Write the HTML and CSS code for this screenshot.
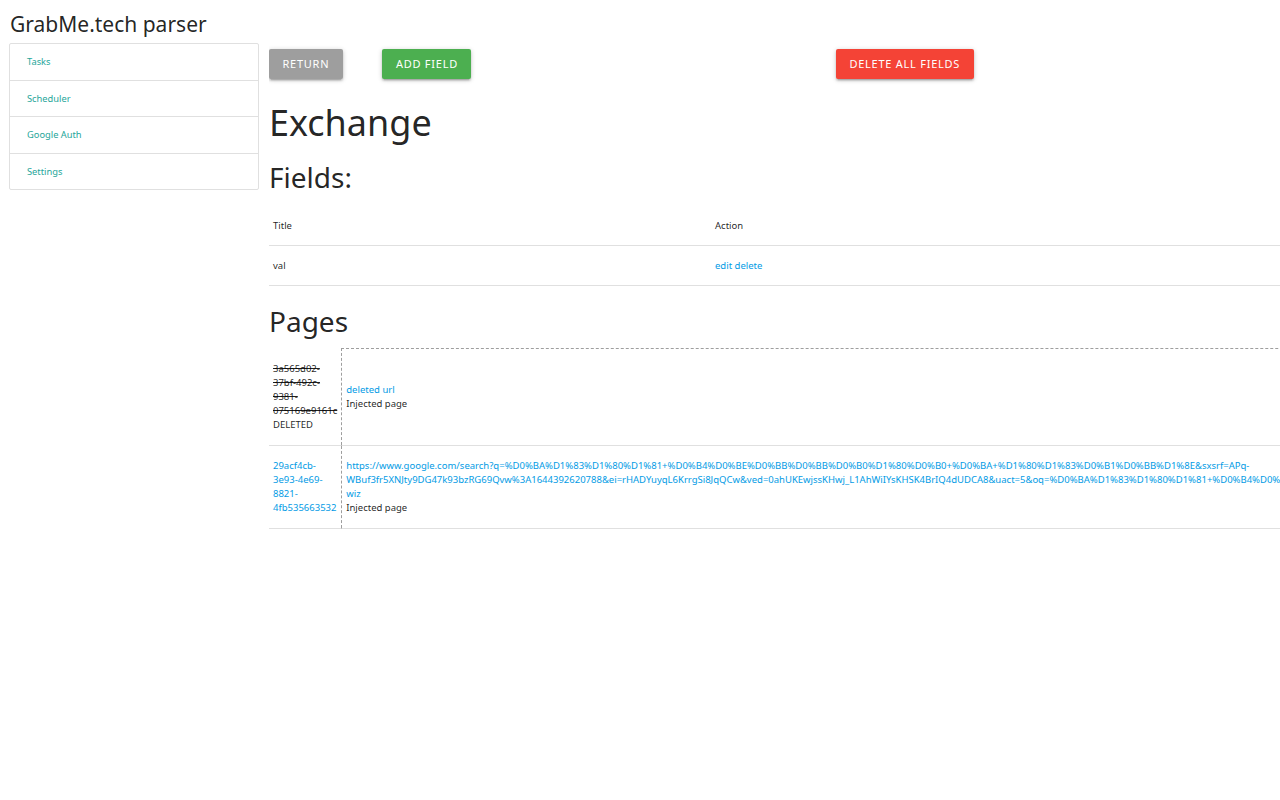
FILE: index.html
```html
<!DOCTYPE html>
<html lang="en">
<head>
<meta charset="utf-8">
<title>GrabMe.tech parser</title>
<link rel="stylesheet" href="styles.css">
</head>
<body>
<header class="brand">GrabMe.tech parser</header>
<div class="layout">
  <nav class="sidebar">
    <a class="nav-item" href="#">Tasks</a>
    <a class="nav-item" href="#">Scheduler</a>
    <a class="nav-item" href="#">Google Auth</a>
    <a class="nav-item" href="#">Settings</a>
  </nav>
  <main class="content">
    <div class="toolbar">
      <a class="btn btn-grey" href="#">Return</a>
      <a class="btn btn-green" href="#">Add field</a>
      <a class="btn btn-red" href="#">Delete all fields</a>
    </div>
    <h1 class="title">Exchange</h1>
    <h2 class="section fields-title">Fields:</h2>
    <table class="fields">
      <thead>
        <tr><th class="col-title">Title</th><th>Action</th></tr>
      </thead>
      <tbody>
        <tr><td>val</td><td><a href="#">edit</a> <a href="#">delete</a></td></tr>
      </tbody>
    </table>
    <h2 class="section pages-title">Pages</h2>
    <table class="pages">
      <tbody>
        <tr>
          <td class="uuid"><s>3a565d02-37bf-492c-9381-075169e9161c</s><br>DELETED</td>
          <td class="url"><a href="#">deleted url</a><br>Injected page</td>
        </tr>
        <tr>
          <td class="uuid"><a href="#">29acf4cb-3e93-4e69-8821-4fb535663532</a></td>
          <td class="url"><a href="#">https://www.google.com/search?q=%D0%BA%D1%83%D1%80%D1%81+%D0%B4%D0%BE%D0%BB%D0%BB%D0%B0%D1%80%D0%B0+%D0%BA+%D1%80%D1%83%D0%B1%D0%BB%D1%8E&amp;sxsrf=APq-WBuf3fr5XNJty9DG47k93bzRG69Qvw%3A1644392620788&amp;ei=rHADYuyqL6KrrgSi8JqQCw&amp;ved=0ahUKEwjssKHwj_L1AhWiIYsKHSK4BrIQ4dUDCA8&amp;uact=5&amp;oq=%D0%BA%D1%83%D1%80%D1%81+%D0%B4%D0%BE%D0%BB%D0%BB%D0%B0%D1%80%D0%B0+%D0%BA+%D1%80%D1%83%D0%B1%D0%BB%D1%8E&amp;gs_lcp=Cgdnd3Mtd2l6EAMyBQgAEIAEMgUIABCABDIFCAAQgAQyBggAEBYQHjoHCAAQRxCwAzoHCAAQsAMQQzoKCAAQ5AIQsAMYAUoECEEYAEoECEYYAVC6BVjEDGCiDmgBcAJ4AIABkAGIAcUFkgEDMC41mAEAoAEByAERwAEB2gEGCAEQARgJ&amp;sclient=gws-wiz</a><br>Injected page</td>
        </tr>
      </tbody>
    </table>
  </main>
</div>
</body>
</html>
```
FILE: styles.css
```css
html, body {
  margin: 0;
  padding: 0;
  background: #ffffff;
}

body {
  font-family: "Noto Sans", "Open Sans", sans-serif;
  color: rgba(0, 0, 0, 0.87);
  overflow-x: hidden;
}

a {
  text-decoration: none;
  color: #039be5;
}

.brand {
  padding: 9.5px 10px 0;
  font-size: 21px;
  line-height: 28px;
  height: 28px;
  color: rgba(0, 0, 0, 0.87);
}

.layout {
  display: flex;
  align-items: flex-start;
  gap: 10px;
  margin-top: 5.5px;
  padding-left: 9px;
}

.sidebar {
  flex: 0 0 250px;
  box-sizing: border-box;
  display: flex;
  flex-direction: column;
  border: 1px solid #e0e0e0;
  border-radius: 2px;
}

.nav-item {
  display: block;
  padding: 10px 17px;
  line-height: 15.5px;
  font-size: 9.3px;
  color: #26a69a;
  border-bottom: 1px solid #e0e0e0;
}

.nav-item:last-child {
  border-bottom: none;
}

.content {
  flex: 1 1 auto;
  min-width: 0;
  overflow: hidden;
}

.toolbar {
  display: grid;
  grid-template-columns: repeat(6, 113.4px);
  margin-top: 6px;
}

.btn {
  justify-self: start;
  display: inline-block;
  height: 30px;
  line-height: 30px;
  padding: 0 13.5px;
  font-size: 11px;
  letter-spacing: 0.75px;
  text-transform: uppercase;
  color: #ffffff;
  border-radius: 2px;
  box-shadow: 0 2px 2px 0 rgba(0, 0, 0, 0.14), 0 3px 1px -2px rgba(0, 0, 0, 0.12), 0 1px 5px 0 rgba(0, 0, 0, 0.2);
  white-space: nowrap;
}

.btn-grey { background: #9e9e9e; }
.btn-green { background: #4caf50; }
.btn-red { background: #f44336; grid-column: 6; }

.title {
  margin: 22px 0 0;
  font-size: 36px;
  line-height: 44px;
  font-weight: 400;
}

.section {
  margin: 0;
  font-size: 28px;
  line-height: 34px;
  font-weight: 400;
}

.fields-title { margin-top: 15.4px; }
.pages-title { margin-top: 18px; }

table {
  border-collapse: collapse;
  font-size: 9.5px;
  line-height: 14px;
}

.fields {
  width: 100%;
  margin-top: 12px;
}

.fields th,
.fields td {
  padding: 12.5px 4px;
  text-align: left;
  font-weight: 400;
  vertical-align: middle;
}

.fields tr {
  border-bottom: 1px solid rgba(0, 0, 0, 0.12);
}

.fields .col-title {
  width: 434px;
}

.pages {
  margin-top: 10px;
}

.pages tr {
  border-bottom: 1px solid rgba(0, 0, 0, 0.12);
}

.pages td {
  padding: 13px 4px;
  text-align: left;
  vertical-align: middle;
}

.pages .url {
  border: 1px dashed #9e9e9e;
}

.pages s {
  color: rgba(0, 0, 0, 0.87);
}
```
